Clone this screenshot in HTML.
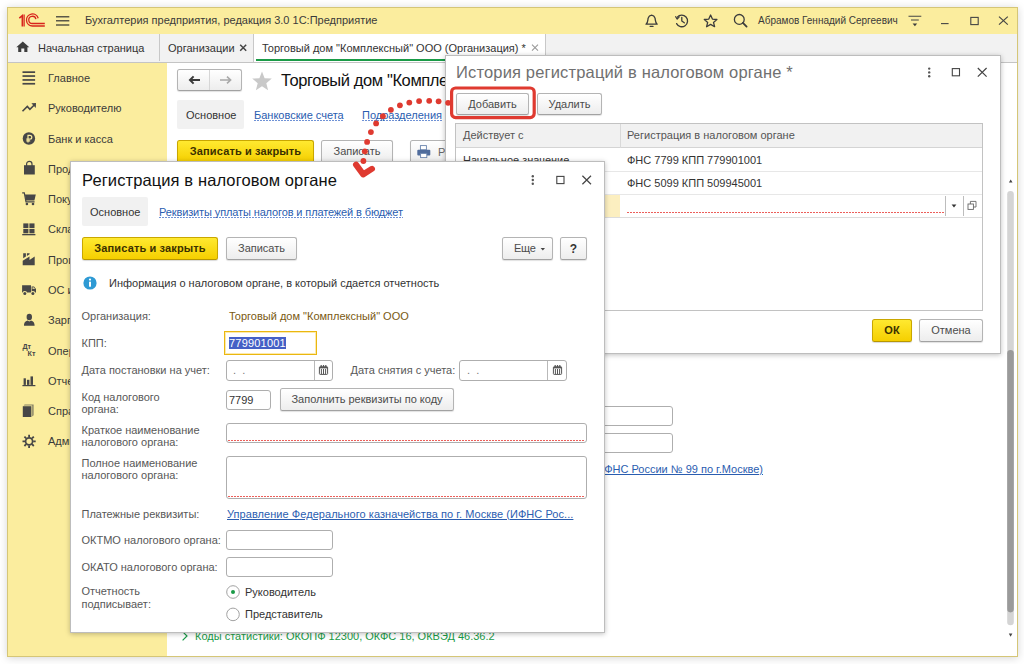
<!DOCTYPE html>
<html lang="ru">
<head>
<meta charset="utf-8">
<title>1С:Предприятие</title>
<style>
*{box-sizing:border-box;margin:0;padding:0}
html,body{width:1024px;height:664px;overflow:hidden;background:#fff}
body{font-family:"Liberation Sans",Arial,sans-serif;font-size:11px;color:#333;position:relative}
.abs{position:absolute}
.t{position:absolute;white-space:nowrap;line-height:14px}
#win{position:absolute;left:7px;top:7px;width:1011px;height:650px;border:1px solid #d5c677;background:#fff;box-shadow:0 1px 8px rgba(0,0,0,.17)}
#titlebar{position:absolute;left:8px;top:8px;width:1009px;height:26px;background:#fbed9e}
#tabbar{position:absolute;left:8px;top:34px;width:1009px;height:29px;background:#f2f2f2;border-bottom:1px solid #c4c4c4}
#sidebar{position:absolute;left:8px;top:63px;width:159px;height:593px;background:#fbed9e}
.sb{position:absolute;left:48px;white-space:nowrap;line-height:14px;color:#3a3a3a}
.btn{position:absolute;border:1px solid #b4b4b4;border-bottom-color:#a2a2a2;border-radius:2.5px;background:linear-gradient(#fff,#ededed);box-shadow:0 1px 1px rgba(0,0,0,.12);text-align:center;white-space:nowrap;color:#4c4c4c;line-height:20px}
.ybtn{position:absolute;border:1px solid #c9a700;border-bottom-color:#b89700;border-radius:2.5px;background:linear-gradient(#ffe930,#f5cf00);box-shadow:0 1px 1px rgba(0,0,0,.15);text-align:center;white-space:nowrap;color:#3a3000;font-weight:bold;line-height:20px;letter-spacing:.13px}
.inp{position:absolute;border:1px solid #aeaeae;border-radius:3px;background:#fff}
.dash{position:absolute;height:1px;background:repeating-linear-gradient(90deg,#ec5f5a 0,#ec5f5a 2px,transparent 2px,transparent 3px)}
.link{color:#2a5db0;text-decoration:underline}
.dlink{color:#2a5db0;background-image:repeating-linear-gradient(90deg,#6f92d6 0,#6f92d6 2px,transparent 2px,transparent 3px);background-size:100% 1px;background-position:0 12px;background-repeat:no-repeat}
.dlg{position:absolute;background:#fff;border:1px solid #bdbdbd;box-shadow:0 1px 5px rgba(0,0,0,.25)}
.lbl{position:absolute;white-space:nowrap;line-height:12px;color:#585858;margin-left:-.5px}
</style>
</head>
<body>
<div id="win"></div>
<div id="titlebar"></div>
<div id="tabbar"></div>
<div id="sidebar"></div>

<!-- TITLEBAR -->
<svg class="abs" style="left:16px;top:11px" width="34" height="20" viewBox="16 11 34 20">
 <g fill="none" stroke="#d8241d" stroke-linecap="butt" stroke-linejoin="miter">
  <path d="M19.3 18.1 L22.3 15.6 L22.3 26.6" stroke-width="1.5"/>
  <path d="M24.1 14.4 L24.1 26.6" stroke-width="1.3"/>
  <path d="M38.2 18.2 A6 6 0 1 0 32.5 26 L44.8 26" stroke-width="1.3"/>
  <path d="M35.9 19.2 A3.6 3.6 0 1 0 32.5 23.5 L44.8 23.5" stroke-width="1.3"/>
 </g>
</svg>
<svg class="abs" style="left:54px;top:13px" width="18" height="16" viewBox="54 13 18 16">
 <g stroke="#5b5848" stroke-width="1.5"><path d="M56 16.7H69.3M56 20.8H69.3M56 25H69.3"/></g>
</svg>
<svg class="abs" style="left:640px;top:10px" width="375" height="22" viewBox="640 10 375 22">
 <g fill="none" stroke="#3c3c3c" stroke-width="1.3" stroke-linejoin="round" stroke-linecap="round">
  <!-- bell -->
  <path d="M646 24.2 C648.3 22.5 647.6 19.5 648.3 17.8 C649 15.6 650.6 15.3 651.6 15.2 C652.6 15.3 654.2 15.6 654.9 17.8 C655.6 19.5 654.9 22.5 657.2 24.2 Z"/>
  <path d="M650.2 26.4 H653"/>
  <!-- history -->
  <path d="M677.3 17.2 A5.8 5.8 0 1 1 676.6 23.6"/>
  <path d="M681.8 17.3 V20.9 L684.3 22.8"/>
  <path d="M675.6 16.6 L677.2 19.2 L679.3 16.9" stroke-width="1.1"/>
  <!-- star -->
  <path d="M710.6 15 L712.4 19.1 L716.9 19.5 L713.5 22.4 L714.6 26.7 L710.6 24.4 L706.6 26.7 L707.7 22.4 L704.3 19.5 L708.8 19.1 Z"/>
  <!-- search -->
  <circle cx="739.3" cy="19.4" r="4.9"/>
  <path d="M742.9 22.9 L746.6 26.6" stroke-width="1.8"/>
 </g>
 <g fill="none" stroke="#454545" stroke-width="1.1">
  <path d="M908.5 16.2 H921.3 M911 20 H918.8"/>
  <path d="M941 23.6 H948.6"/>
  <rect x="970.8" y="17.4" width="7.4" height="7.2"/>
  <path d="M999 16.6 L1007.8 24.6 M1007.8 16.6 L999 24.6" stroke-width="1.2"/>
 </g>
 <path d="M912.6 23.4 H917.2 L914.9 26.2 Z" fill="#3c3c3c"/>
</svg>

<div class="t" style="left:85px;top:13px;color:#3a3a3a">Бухгалтерия предприятия, редакция 3.0 1С:Предприятие</div>
<div class="t" style="left:758px;top:14px;color:#3a3a3a;font-size:10px">Абрамов Геннадий Сергеевич</div>

<!-- TABBAR -->
<svg class="abs" style="left:14px;top:38px" width="18" height="18" viewBox="14 38 18 18">
 <path d="M16.3 47.2 L22.8 41.4 L29.3 47.2 H27.4 V52 H24.3 V48.4 H21.3 V52 H18.2 V47.2 Z" fill="#3d3d3d"/>
</svg>
<svg class="abs" style="left:238px;top:42px" width="12" height="12" viewBox="238 42 12 12">
 <path d="M240.2 44.7 L246.2 50.7 M246.2 44.7 L240.2 50.7" stroke="#444" stroke-width="1.5" fill="none"/>
</svg>

<div class="t" style="left:38px;top:41px;color:#333">Начальная страница</div>
<div class="abs" style="left:159px;top:34px;width:1px;height:27px;background:#c8c8c8"></div>
<div class="t" style="left:168px;top:41px;color:#333">Организации</div>
<div class="abs" style="left:253px;top:34px;width:293px;height:28px;background:#fff;border-left:1px solid #c8c8c8;border-right:1px solid #c8c8c8"></div>
<div class="abs" style="left:256px;top:59px;width:289px;height:2px;background:#1a9b47"></div>
<div class="t" style="left:262px;top:41px;color:#333">Торговый дом "Комплексный" ООО (Организация) *</div>
<svg class="abs" style="left:529px;top:42px" width="12" height="12" viewBox="529 42 12 12">
 <path d="M532 44.6 L538 50.6 M538 44.6 L532 50.6" stroke="#9a9a9a" stroke-width="1.1" fill="none"/>
</svg>

<!-- SIDEBAR -->
<svg class="abs" style="left:16px;top:64px" width="28" height="392" viewBox="16 64 28 392">
 <g fill="#474747" stroke="none">
  <!-- 1 main: 4 lines -->
  <rect x="22.5" y="71.3" width="12.6" height="1.7"/><rect x="22.5" y="75.2" width="12.6" height="1.7"/><rect x="22.5" y="79.1" width="12.6" height="1.7"/><rect x="22.5" y="82.9" width="12.6" height="1.7"/>
  <!-- 3 ruble circle -->
  <circle cx="28.9" cy="138.5" r="6.2"/>
  <!-- 4 bag -->
  <path d="M24 165.2 H34.8 V174.5 H24 Z"/>
  <!-- 5 cart -->
  <path d="M25 194.6 H35.8 L34.4 200.6 H25.6 Z"/>
  <circle cx="26.9" cy="204" r="1.3"/><circle cx="33" cy="204" r="1.3"/>
  <!-- 6 warehouse -->
  <rect x="23.3" y="223.4" width="5.1" height="4.6"/><rect x="29.4" y="223.4" width="5.1" height="4.6"/>
  <rect x="23.3" y="228.9" width="5.1" height="4.4"/><rect x="29.4" y="228.9" width="5.1" height="4.4"/>
  <rect x="22.2" y="234" width="13.2" height="1.3"/>
  <!-- 7 factory -->
  <path d="M22.7 265.3 V260.8 L29.5 256.5 V260 L34.7 256.5 V265.3 Z"/>
  <path d="M23.2 253.2 H25.9 V256.4 L23.2 258.2 Z M26.9 253.2 H29.6 V254.3 L26.9 256 Z"/>
  <!-- 8 truck -->
  <path d="M22.1 285.3 H31 V292.4 H22.1 Z M31.6 286.4 H34 L36 289 V292.4 H31.6 Z"/>
  <circle cx="24.8" cy="293.4" r="2.3" fill="#fbed9e"/><circle cx="32.9" cy="293.4" r="2.3" fill="#fbed9e"/>
  <circle cx="24.8" cy="293.6" r="1.5"/><circle cx="32.9" cy="293.6" r="1.5"/>
  <path d="M32.5 287.2 H33.7 L35.1 289 H32.5 Z" fill="#fbed9e" opacity=".8"/>
  <!-- 9 person -->
  <ellipse cx="29.3" cy="317" rx="2.7" ry="3.2"/>
  <path d="M24 325.7 C24 321.6 26.5 321.2 27.6 320.6 L29.3 321.6 L31 320.6 C32.1 321.2 34.6 321.6 34.6 325.7 Z"/>
  <!-- 11 reports -->
  <rect x="23.6" y="378.3" width="2.3" height="6.6"/><rect x="27" y="379.8" width="2.4" height="5.1"/><rect x="30.5" y="376.4" width="2.5" height="8.5"/>
  <rect x="22.4" y="385" width="13" height="1.2"/>
  <!-- 12 book -->
  <path d="M22.8 406.2 H31.4 V417 H22.8 Z"/>
  <path d="M24.6 404.6 H33.6 V415.2 L32.2 416.4 V405.6 H23.6 Z" opacity=".65"/>
 </g>
 <g fill="none" stroke="#474747">
  <!-- 2 trend -->
  <path d="M22.5 111.3 L27.3 106.4 L29.9 109.3 L34 105.2" stroke-width="1.6"/>
  <path d="M31.4 103.3 L36 103 L35.8 107.9 Z" fill="#474747" stroke="none"/>
  <!-- bag handle -->
  <path d="M26.6 166 V164 A2.7 2.7 0 0 1 32 164 V166" stroke-width="1.2"/>
  <!-- cart handle/frame -->
  <path d="M22.2 192.8 H24.3 L26 201.8 H34.6" stroke-width="1.2"/>
  <!-- gear -->
  <circle cx="29.1" cy="441.3" r="3.5" stroke-width="1.7"/>
  <path d="M29.1 434.7 V437.2 M29.1 445.4 V447.9 M22.5 441.3 H25 M33.2 441.3 H35.7 M24.4 436.6 L26.2 438.4 M32 444.2 L33.8 446 M24.4 446 L26.2 444.2 M32 438.4 L33.8 436.6" stroke-width="1.8"/>
 </g>
 <!-- ruble glyph -->
 <g fill="none" stroke="#fbed9e" stroke-width="1.2">
  <path d="M28 142.5 V135.4 H29.9 A1.9 1.9 0 0 1 29.9 139.2 H26.3 M26.3 140.9 H30.2"/>
 </g>
 <!-- DtKt -->
 <text x="22.4" y="348.8" font-family="Liberation Sans,Arial,sans-serif" font-size="7.2" font-weight="bold" fill="#474747">Дт</text>
 <text x="27.6" y="356.3" font-family="Liberation Sans,Arial,sans-serif" font-size="7.2" font-weight="bold" fill="#474747">Кт</text>
</svg>

<div class="sb" style="top:71px">Главное</div>
<div class="sb" style="top:101px">Руководителю</div>
<div class="sb" style="top:132px">Банк и касса</div>
<div class="sb" style="top:162px">Продажи</div>
<div class="sb" style="top:192px">Покупки</div>
<div class="sb" style="top:222px">Склад</div>
<div class="sb" style="top:253px">Производство</div>
<div class="sb" style="top:283px">ОС и НМА</div>
<div class="sb" style="top:313px">Зарплата и кадры</div>
<div class="sb" style="top:344px">Операции</div>
<div class="sb" style="top:374px">Отчеты</div>
<div class="sb" style="top:404px">Справочники</div>
<div class="sb" style="top:434px">Администрирование</div>

<!-- MAIN FORM -->

<!-- nav buttons -->
<div class="btn" style="left:177px;top:69px;width:65px;height:22px"></div>
<div class="abs" style="left:209px;top:70px;width:1px;height:20px;background:#d6d6d6"></div>
<svg class="abs" style="left:180px;top:72px" width="60" height="16" viewBox="180 72 60 16">
 <path d="M200 80 H190 M193.6 76.4 L190 80 L193.6 83.6" fill="none" stroke="#3a3a3a" stroke-width="2"/>
 <path d="M220 80 H230.6 M227 76.6 L230.6 80 L227 83.4" fill="none" stroke="#a8a8a8" stroke-width="1.6"/>
</svg>
<svg class="abs" style="left:250px;top:70px" width="24" height="22" viewBox="250 70 24 22">
 <path d="M262 71.6 L264.6 78.2 L271.8 78.6 L266.3 83.2 L268.1 90.2 L262 86.3 L255.9 90.2 L257.7 83.2 L252.2 78.6 L259.4 78.2 Z" fill="#c9c9c9"/>
</svg>
<div class="t" style="left:281px;top:69px;font-size:16.5px;line-height:22px;color:#111;letter-spacing:-.4px">Торговый дом "Комплексный" ООО (Организация) *</div>
<div class="abs" style="left:177px;top:100px;width:67px;height:29px;background:#f1f1f1;border-radius:2px"></div>
<div class="t" style="left:186px;top:108px;color:#333">Основное</div>
<div class="t dlink" style="left:254px;top:108px">Банковские счета</div>
<div class="t dlink" style="left:362px;top:108px">Подразделения</div>
<div class="ybtn" style="left:177px;top:140px;width:137px;height:23px">Записать и закрыть</div>
<div class="btn" style="left:321px;top:140px;width:72px;height:23px">Записать</div>
<div class="btn" style="left:410px;top:140px;width:90px;height:23px"></div>
<svg class="abs" style="left:416px;top:144px" width="16" height="16" viewBox="416 144 16 16">
 <rect x="420.4" y="145.6" width="6" height="4.2" fill="#fff" stroke="#6a84ad" stroke-width=".9"/>
 <rect x="417.3" y="149.8" width="13" height="5.8" rx="1" fill="#506c9c"/>
 <rect x="420.6" y="153.4" width="6.2" height="4.2" fill="#fff" stroke="#6a84ad" stroke-width=".9"/>
</svg>
<div class="t" style="left:438px;top:145px;color:#666">Реквизиты</div>
<!-- behind dialog 2 -->
<div class="inp" style="left:500px;top:406px;width:173px;height:20px"></div>
<div class="inp" style="left:500px;top:433px;width:173px;height:20px"></div>
<div class="t link" style="right:261px;top:462px">Инспекция ФНС России № 99 по г.Москве)</div>
<svg class="abs" style="left:180px;top:629px" width="12" height="14" viewBox="180 630 12 14"><path d="M182.6 632.6 L187 637 L182.6 641.4" fill="none" stroke="#1a9b47" stroke-width="1.2"/></svg>
<div class="t" style="left:195px;top:629px;color:#1a9b47">Коды статистики: ОКОПФ 12300, ОКФС 16, ОКВЭД 46.36.2</div>
<!-- scrollbar -->
<svg class="abs" style="left:1004px;top:174px" width="13" height="470" viewBox="1004 174 13 470">
 <path d="M1008.9 182.6 H1012.5 L1010.7 179.4 Z" fill="#444"/>
 <rect x="1007.2" y="191" width="6.6" height="434.2" rx="3.3" fill="#d4d4d4"/>
 <rect x="1007.2" y="350" width="6.6" height="262.4" rx="3.3" fill="#9a9a9a"/>
 <path d="M1008.8 633.5 H1012.4 L1010.6 636.7 Z" fill="#444"/>
</svg>


<!-- DIALOG 1 -->

<div class="dlg" style="left:445px;top:55px;width:556px;height:299px"></div>
<div class="t" style="left:456px;top:61px;font-size:16.5px;line-height:22px;color:#707070;letter-spacing:.16px">История регистраций в налоговом органе *</div>
<svg class="abs" style="left:920px;top:62px" width="74" height="20" viewBox="920 62 74 20">
 <g fill="#555"><circle cx="929.2" cy="68.6" r="1.2"/><circle cx="929.2" cy="72.4" r="1.2"/><circle cx="929.2" cy="76.2" r="1.2"/></g>
 <rect x="952.3" y="68.6" width="7.2" height="7.2" fill="none" stroke="#444" stroke-width="1.1"/>
 <path d="M977.8 68 L986.6 76.6 M986.6 68 L977.8 76.6" fill="none" stroke="#444" stroke-width="1.2"/>
</svg>
<div class="btn" style="left:456px;top:93px;width:73px;height:22px">Добавить</div>
<div class="btn" style="left:537px;top:93px;width:65px;height:22px">Удалить</div>
<!-- table -->
<div class="abs" style="left:455px;top:123px;width:528px;height:188px;border:1px solid #c2c2c2;background:#fff"></div>
<div class="abs" style="left:456px;top:124px;width:526px;height:24px;background:#f1f1f1;border-bottom:1px solid #d4d4d4"></div>
<div class="abs" style="left:620px;top:124px;width:1px;height:24px;background:#d9d9d9"></div>
<div class="t" style="left:463px;top:128px;color:#555">Действует с</div>
<div class="t" style="left:627px;top:128px;color:#555">Регистрация в налоговом органе</div>
<div class="abs" style="left:456px;top:171px;width:526px;height:1px;background:#e7e7e7"></div>
<div class="abs" style="left:456px;top:194px;width:526px;height:1px;background:#e7e7e7"></div>
<div class="abs" style="left:456px;top:217px;width:526px;height:1px;background:#dcdcdc"></div>
<div class="t" style="left:463px;top:153px;color:#333">Начальное значение</div>
<div class="t" style="left:627px;top:153px;color:#333">ФНС 7799 КПП 779901001</div>
<div class="t" style="left:627px;top:176px;color:#333">ФНС 5099 КПП 509945001</div>
<div class="abs" style="left:456px;top:195px;width:164px;height:22px;background:#fcefc0"></div>
<div class="dash" style="left:627px;top:212px;width:318px"></div>
<div class="abs" style="left:945px;top:196px;width:1px;height:20px;background:#bdbdbd"></div>
<div class="abs" style="left:963px;top:196px;width:1px;height:20px;background:#bdbdbd"></div>
<svg class="abs" style="left:946px;top:196px" width="36" height="20" viewBox="946 196 36 20">
 <path d="M951.6 204.4 H956.4 L954 207.4 Z" fill="#333"/>
 <rect x="968" y="204" width="5.4" height="5.4" fill="#fff" stroke="#666" stroke-width=".9"/>
 <path d="M970.4 204 V201.4 H976 V207 H973.4" fill="none" stroke="#666" stroke-width=".9"/>
</svg>
<div class="ybtn" style="left:872px;top:319px;width:40px;height:23px">ОК</div>
<div class="btn" style="left:919px;top:319px;width:64px;height:23px">Отмена</div>


<!-- DIALOG 2 -->

<div class="dlg" style="left:70px;top:161px;width:535px;height:472px"></div>
<div class="t" style="left:82px;top:169px;font-size:16.5px;line-height:22px;color:#111;letter-spacing:.11px">Регистрация в налоговом органе</div>
<svg class="abs" style="left:524px;top:170px" width="74" height="20" viewBox="524 170 74 20">
 <g fill="#555"><circle cx="532.8" cy="176.2" r="1.2"/><circle cx="532.8" cy="180" r="1.2"/><circle cx="532.8" cy="183.8" r="1.2"/></g>
 <rect x="556.8" y="176.4" width="7.2" height="7.2" fill="none" stroke="#444" stroke-width="1.1"/>
 <path d="M582.4 175.8 L591 184.2 M591 175.8 L582.4 184.2" fill="none" stroke="#444" stroke-width="1.2"/>
</svg>
<div class="abs" style="left:82px;top:197px;width:66px;height:29px;background:#f1f1f1;border-radius:2px"></div>
<div class="t" style="left:90px;top:205px;color:#333">Основное</div>
<div class="t dlink" style="left:159px;top:205px;letter-spacing:-.12px">Реквизиты уплаты налогов и платежей в бюджет</div>
<div class="ybtn" style="left:82px;top:237px;width:136px;height:23px">Записать и закрыть</div>
<div class="btn" style="left:226px;top:237px;width:71px;height:23px">Записать</div>
<div class="btn" style="left:502px;top:237px;width:51px;height:23px;text-align:left;padding-left:11px;letter-spacing:-.3px">Еще</div>
<svg class="abs" style="left:538px;top:244px" width="10" height="10" viewBox="538 244 10 10"><path d="M540.6 248 H545 L542.8 250.6 Z" fill="#444"/></svg>
<div class="btn" style="left:560px;top:237px;width:27px;height:23px;font-weight:bold;font-size:12px;color:#333;line-height:22px">?</div>
<svg class="abs" style="left:82px;top:275px" width="16" height="16" viewBox="82 275 16 16">
 <circle cx="90" cy="283" r="6.6" fill="#2e9ad4"/>
 <circle cx="90" cy="279.6" r="1.1" fill="#fff"/><rect x="89" y="281.7" width="2" height="5" fill="#fff"/>
</svg>
<div class="t" style="left:109px;top:276px;color:#333">Информация о налоговом органе, в который сдается отчетность</div>

<div class="lbl" style="left:82px;top:310px">Организация:</div>
<div class="t" style="left:229px;top:309px;color:#7a5a12">Торговый дом "Комплексный" ООО</div>

<div class="lbl" style="left:82px;top:337px">КПП:</div>
<div class="inp" style="left:224px;top:331px;width:93px;height:24px;border:1px solid #eab710;box-shadow:inset 0 0 0 1px rgba(250,208,70,.45);border-radius:0"></div>
<div class="t" style="left:229px;top:337px;height:12px;line-height:12px;background:#4560c6;color:#fff;letter-spacing:.2px">779901001</div>

<div class="lbl" style="left:82px;top:364px">Дата постановки на учет:</div>
<div class="inp" style="left:226px;top:360px;width:107px;height:21px"></div>
<div class="abs" style="left:314px;top:361px;width:1px;height:19px;background:#b9b9b9"></div>
<div class="t" style="left:233px;top:363px;color:#777">.&nbsp;&nbsp;.</div>
<div class="lbl" style="left:351px;top:364px">Дата снятия с учета:</div>
<div class="inp" style="left:459px;top:360px;width:108px;height:21px"></div>
<div class="abs" style="left:547px;top:361px;width:1px;height:19px;background:#b9b9b9"></div>
<div class="t" style="left:467px;top:363px;color:#777">.&nbsp;&nbsp;.</div>
<svg class="abs" style="left:316px;top:362px" width="250" height="16" viewBox="316 362 250 16">
 <g>
  <rect x="319.4" y="366.8" width="8.2" height="7.6" rx=".8" fill="#fff" stroke="#555" stroke-width="1"/>
  <rect x="319.4" y="366.8" width="8.2" height="1.6" fill="#555"/>
  <path d="M321.2 365 V367.2 M323.5 365 V367.2 M325.8 365 V367.2" stroke="#555" stroke-width="1.2"/>
  <path d="M321.4 369 V374 M323.5 369 V374 M325.6 369 V374" stroke="#555" stroke-width="1"/>
 </g>
 <g transform="translate(234 0)">
  <rect x="319.4" y="366.8" width="8.2" height="7.6" rx=".8" fill="#fff" stroke="#555" stroke-width="1"/>
  <rect x="319.4" y="366.8" width="8.2" height="1.6" fill="#555"/>
  <path d="M321.2 365 V367.2 M323.5 365 V367.2 M325.8 365 V367.2" stroke="#555" stroke-width="1.2"/>
  <path d="M321.4 369 V374 M323.5 369 V374 M325.6 369 V374" stroke="#555" stroke-width="1"/>
 </g>
</svg>

<div class="lbl" style="left:82px;top:391px">Код налогового</div>
<div class="lbl" style="left:82px;top:403px">органа:</div>
<div class="inp" style="left:226px;top:390px;width:45px;height:20px"></div>
<div class="t" style="left:229px;top:393px;color:#333">7799</div>
<div class="btn" style="left:280px;top:388px;width:174px;height:23px">Заполнить реквизиты по коду</div>

<div class="lbl" style="left:82px;top:424px">Краткое наименование</div>
<div class="lbl" style="left:82px;top:436px">налогового органа:</div>
<div class="inp" style="left:226px;top:423px;width:361px;height:20px"></div>
<div class="dash" style="left:228px;top:440px;width:357px"></div>

<div class="lbl" style="left:82px;top:457px">Полное наименование</div>
<div class="lbl" style="left:82px;top:469px">налогового органа:</div>
<div class="inp" style="left:226px;top:456px;width:361px;height:43px"></div>
<div class="dash" style="left:228px;top:496px;width:357px"></div>

<div class="lbl" style="left:82px;top:508px">Платежные реквизиты:</div>
<div class="t link" style="left:227px;top:507px;letter-spacing:.055px">Управление Федерального казначейства по г. Москве (ИФНС Рос...</div>

<div class="lbl" style="left:82px;top:534px">ОКТМО налогового органа:</div>
<div class="inp" style="left:226px;top:530px;width:107px;height:20px"></div>
<div class="lbl" style="left:82px;top:561px">ОКАТО налогового органа:</div>
<div class="inp" style="left:226px;top:557px;width:107px;height:20px"></div>

<div class="lbl" style="left:82px;top:585px">Отчетность</div>
<div class="lbl" style="left:82px;top:598px">подписывает:</div>
<svg class="abs" style="left:225px;top:584px" width="16" height="40" viewBox="225 584 16 40">
 <circle cx="233" cy="592" r="6.3" fill="#fff" stroke="#a2a2a2" stroke-width="1"/>
 <circle cx="233" cy="592" r="2" fill="#1a9b47"/>
 <circle cx="233" cy="614.4" r="6.3" fill="#fff" stroke="#a2a2a2" stroke-width="1"/>
</svg>
<div class="t" style="left:245px;top:585px;color:#333">Руководитель</div>
<div class="t" style="left:245px;top:607px;color:#333">Представитель</div>

<!-- annotation -->
<svg class="abs" style="left:340px;top:80px" width="210" height="110" viewBox="340 80 210 110">
 <rect x="451.6" y="88" width="82.6" height="29.6" rx="4" fill="none" stroke="#df3a30" stroke-width="3.2"/>
 <g fill="#df3a30">
  <circle cx="448.1" cy="102.8" r="2.9"/><circle cx="438.6" cy="101.3" r="2.9"/><circle cx="429.2" cy="100.8" r="2.9"/><circle cx="419.1" cy="101.1" r="2.9"/>
  <circle cx="409.3" cy="102.6" r="2.9"/><circle cx="399.9" cy="105.3" r="2.9"/><circle cx="390.9" cy="109.8" r="2.9"/><circle cx="382.9" cy="116.2" r="2.9"/>
  <circle cx="376.1" cy="123.4" r="2.9"/><circle cx="370.9" cy="132.1" r="2.9"/><circle cx="367.1" cy="141.9" r="2.9"/><circle cx="364.8" cy="151.3" r="2.9"/>
  <circle cx="363.4" cy="161" r="2.9"/>
 </g>
 <path d="M356 164.6 L363.2 174.4 L372 168.8" fill="none" stroke="#df3a30" stroke-width="6" stroke-linecap="round" stroke-linejoin="round"/>
</svg>


</body>
</html>
